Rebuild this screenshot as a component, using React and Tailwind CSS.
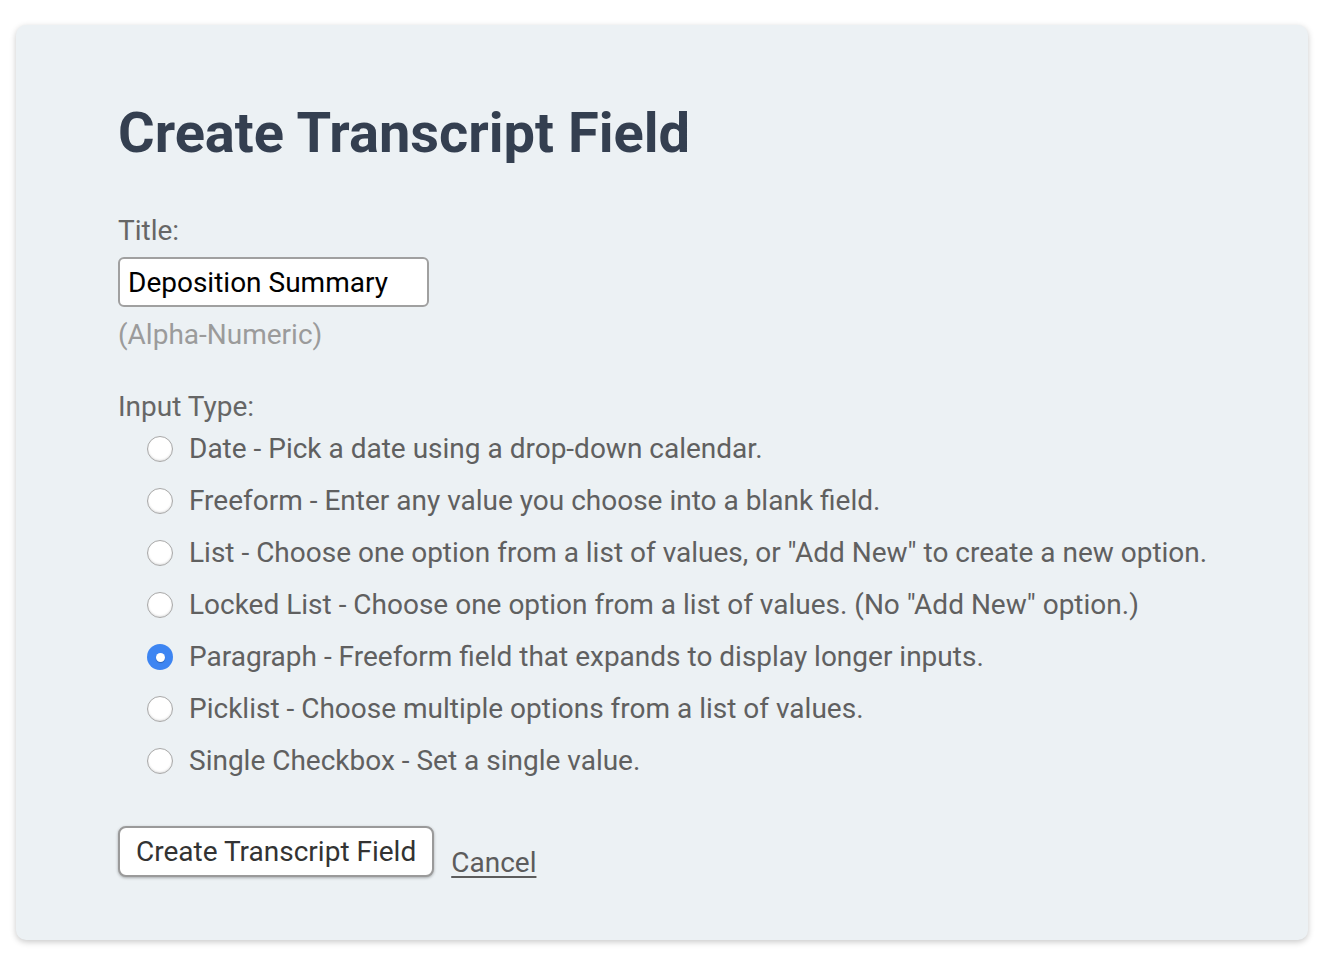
import { useState } from 'react'

const options = [
  ['date', 'Date - Pick a date using a drop-down calendar.'],
  ['freeform', 'Freeform - Enter any value you choose into a blank field.'],
  ['list', 'List - Choose one option from a list of values, or "Add New" to create a new option.'],
  ['locked', 'Locked List - Choose one option from a list of values. (No "Add New" option.)'],
  ['paragraph', 'Paragraph - Freeform field that expands to display longer inputs.'],
  ['picklist', 'Picklist - Choose multiple options from a list of values.'],
  ['checkbox', 'Single Checkbox - Set a single value.'],
]

function Radio({ checked }) {
  if (checked) {
    return (
      <span className="flex h-[26px] w-[26px] shrink-0 items-center justify-center rounded-full bg-[#3d85f2]">
        <span className="h-[9px] w-[9px] rounded-full bg-white shadow-[0_1px_1px_rgba(0,0,0,0.25)]" />
      </span>
    )
  }
  return (
    <span className="h-[26px] w-[26px] shrink-0 rounded-full border border-[#a8a8a8] bg-white shadow-[inset_0_-1px_2px_rgba(0,0,0,0.14)]" />
  )
}

export default function App() {
  const [title, setTitle] = useState('Deposition Summary')
  const [type, setType] = useState('paragraph')

  return (
    <div className="min-h-screen bg-white pt-[25px] px-4 font-['Roboto',sans-serif]">
      <div className="w-[1292px] rounded-[10px] bg-[#ecf1f4] pl-[102px] pr-10 pt-[75px] pb-[63px] shadow-[0_2px_6px_rgba(0,0,0,0.22)]">
        <h1 className="text-[56px] leading-[66px] font-bold text-[#343f50]">Create Transcript Field</h1>

        <div className="mt-[49px] text-[28px] leading-[32px] text-[#666666]">Title:</div>
        <input
          value={title}
          onChange={(e) => setTitle(e.target.value)}
          className="mt-[10px] block h-[50px] w-[311px] rounded-[6px] border-2 border-[#a0a0a0] bg-white px-[8px] text-[28px] text-black outline-none"
        />
        <div className="mt-[12px] text-[28px] leading-[32px] text-[#9b9b9b]">(Alpha-Numeric)</div>

        <div className="mt-[40px] text-[28px] leading-[32px] text-[#666666]">Input Type:</div>
        <div className="pl-[29px]">
          {options.map(([key, label]) => (
            <label
              key={key}
              onClick={() => setType(key)}
              className="flex h-[52px] cursor-pointer items-center gap-[16px] text-[28px] text-[#606060]"
            >
              <Radio checked={type === key} />
              <span className="leading-[52px]">{label}</span>
            </label>
          ))}
        </div>

        <div className="mt-[39px] flex items-end gap-[17px]">
          <button className="h-[51px] rounded-[8px] border-2 border-[#9a9a9a] bg-white px-4 text-[28px] text-[#333333] shadow-[0_1px_3px_rgba(0,0,0,0.3)]">
            Create Transcript Field
          </button>
          <a href="#" className="mb-[-4px] text-[28px] leading-[36px] text-[#5c5c5c] underline underline-offset-[4px]">
            Cancel
          </a>
        </div>
      </div>
    </div>
  )
}
